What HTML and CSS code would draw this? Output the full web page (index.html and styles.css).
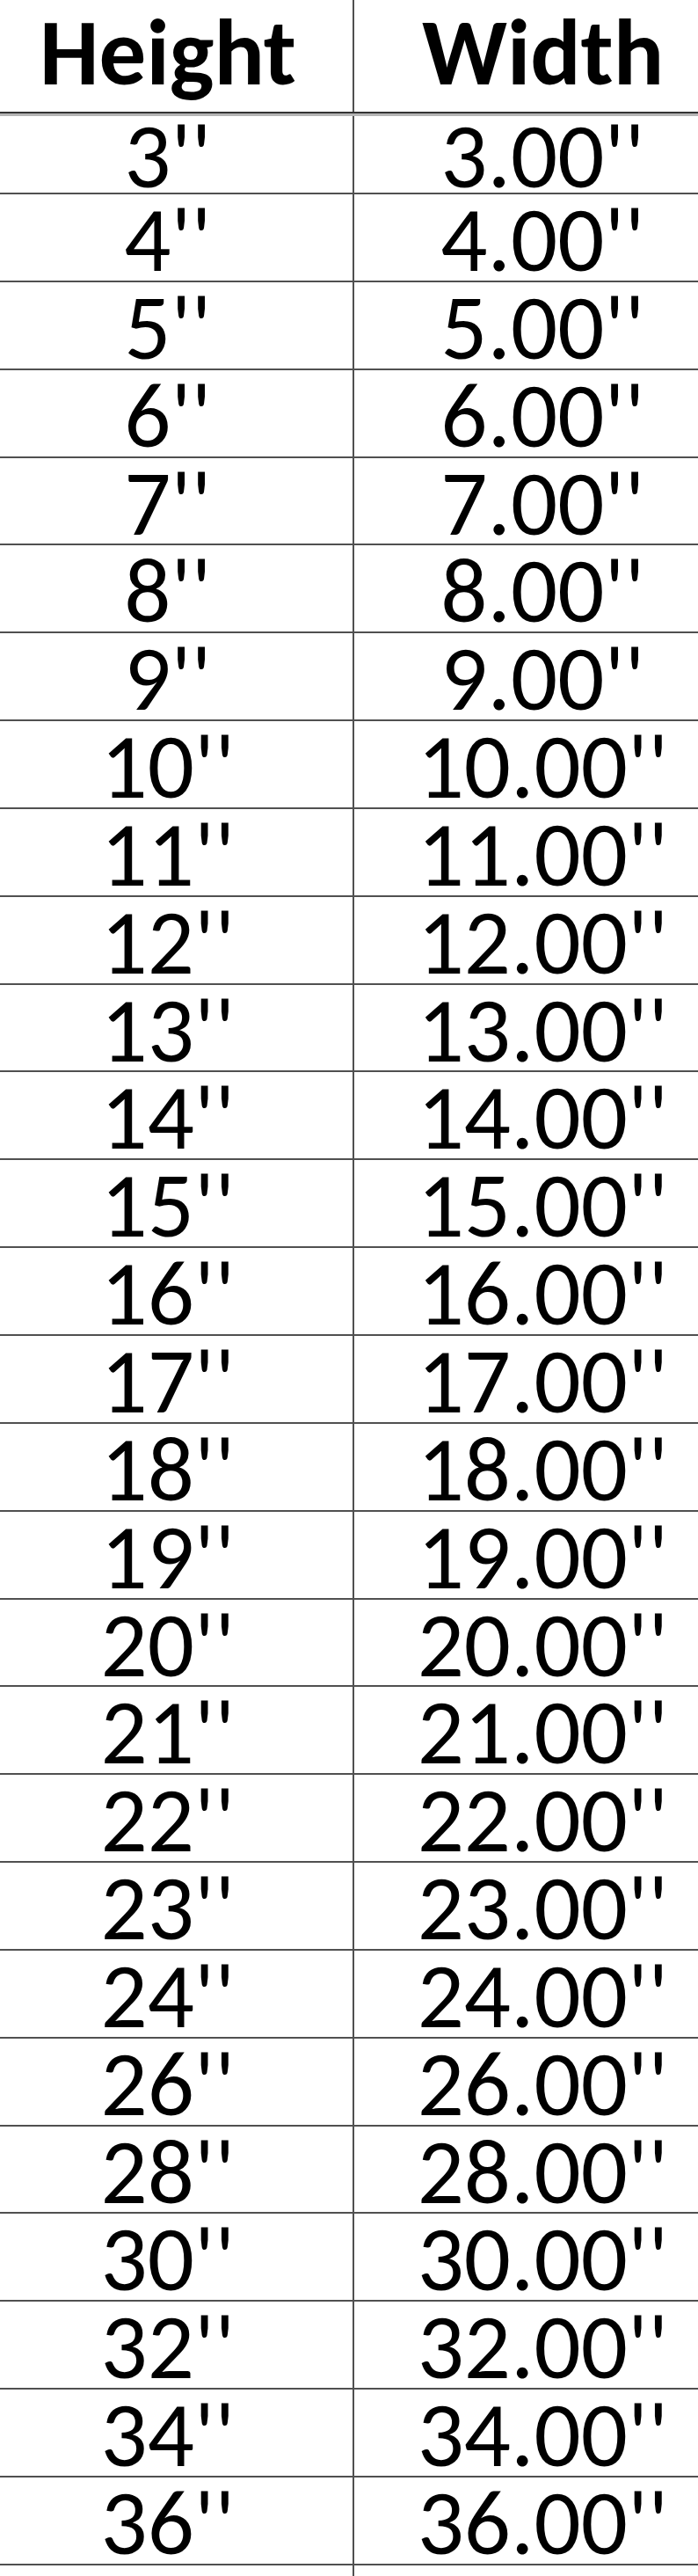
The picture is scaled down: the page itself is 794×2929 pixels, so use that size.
FILE: index.html
```html
<!DOCTYPE html>
<html lang="en">
<head>
<meta charset="utf-8">
<title>Height / Width</title>
<link rel="stylesheet" href="styles.css">
</head>
<body>
<div class="table">
  <div class="row head"><div class="cell c1">Height</div><div class="cell c2">Width</div></div>
  <div class="row first"><div class="cell c1">3''</div><div class="cell c2">3.00''</div></div>
  <div class="row"><div class="cell c1">4''</div><div class="cell c2">4.00''</div></div>
  <div class="row"><div class="cell c1">5''</div><div class="cell c2">5.00''</div></div>
  <div class="row"><div class="cell c1">6''</div><div class="cell c2">6.00''</div></div>
  <div class="row"><div class="cell c1">7''</div><div class="cell c2">7.00''</div></div>
  <div class="row"><div class="cell c1">8''</div><div class="cell c2">8.00''</div></div>
  <div class="row"><div class="cell c1">9''</div><div class="cell c2">9.00''</div></div>
  <div class="row"><div class="cell c1">10''</div><div class="cell c2">10.00''</div></div>
  <div class="row"><div class="cell c1">11''</div><div class="cell c2">11.00''</div></div>
  <div class="row"><div class="cell c1">12''</div><div class="cell c2">12.00''</div></div>
  <div class="row"><div class="cell c1">13''</div><div class="cell c2">13.00''</div></div>
  <div class="row"><div class="cell c1">14''</div><div class="cell c2">14.00''</div></div>
  <div class="row"><div class="cell c1">15''</div><div class="cell c2">15.00''</div></div>
  <div class="row"><div class="cell c1">16''</div><div class="cell c2">16.00''</div></div>
  <div class="row"><div class="cell c1">17''</div><div class="cell c2">17.00''</div></div>
  <div class="row"><div class="cell c1">18''</div><div class="cell c2">18.00''</div></div>
  <div class="row"><div class="cell c1">19''</div><div class="cell c2">19.00''</div></div>
  <div class="row"><div class="cell c1">20''</div><div class="cell c2">20.00''</div></div>
  <div class="row"><div class="cell c1">21''</div><div class="cell c2">21.00''</div></div>
  <div class="row"><div class="cell c1">22''</div><div class="cell c2">22.00''</div></div>
  <div class="row"><div class="cell c1">23''</div><div class="cell c2">23.00''</div></div>
  <div class="row"><div class="cell c1">24''</div><div class="cell c2">24.00''</div></div>
  <div class="row"><div class="cell c1">26''</div><div class="cell c2">26.00''</div></div>
  <div class="row"><div class="cell c1">28''</div><div class="cell c2">28.00''</div></div>
  <div class="row"><div class="cell c1">30''</div><div class="cell c2">30.00''</div></div>
  <div class="row"><div class="cell c1">32''</div><div class="cell c2">32.00''</div></div>
  <div class="row"><div class="cell c1">34''</div><div class="cell c2">34.00''</div></div>
  <div class="row"><div class="cell c1">36''</div><div class="cell c2">36.00''</div></div>
  <div class="row tail"><div class="cell c1"></div><div class="cell c2"></div></div>
</div>
</body>
</html>
```

FILE: styles.css
```css
html, body {
  margin: 0;
  padding: 0;
  background: #ffffff;
}

.table {
  width: 794px;
  font-family: Carlito, Calibri, Lato, "Open Sans", sans-serif;
  color: #000000;
}

.row {
  display: grid;
  grid-template-columns: 403px 1fr;
  box-sizing: border-box;
  height: 99.85px;
  border-bottom: 2px solid #505050;
}

.cell {
  box-sizing: border-box;
  font-size: 105px;
  line-height: 80px;
  text-align: center;
  white-space: nowrap;
  padding-top: 11px;
}

.c1 {
  border-right: 2px solid #505050;
  padding-right: 19px;
}

.c2 {
  padding-left: 38px;
}

.head {
  height: 129px;
  border-bottom: 2px solid #333333;
}

.head .cell {
  font-size: 107px;
  font-weight: 700;
  padding-top: 20px;
}

.first {
  height: 92px;
  border-top: 3px solid #b4b4b4;
}

.first .cell {
  padding-top: 5px;
}

.tail {
  height: 14px;
  border-bottom: none;
}
```
